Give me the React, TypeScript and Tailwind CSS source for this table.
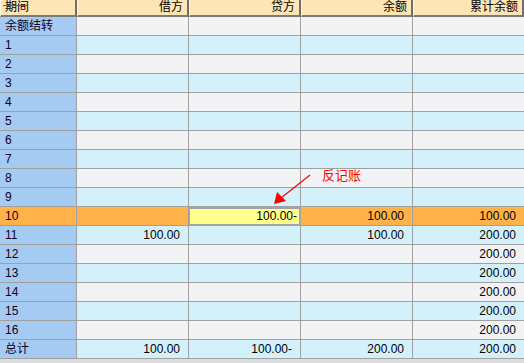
import React from 'react';

type Row = {
  label: string;
  debit?: string;
  credit?: string;
  balance?: string;
  total?: string;
};

const rows: Row[] = [
  { label: '余额结转' },
  { label: '1' },
  { label: '2' },
  { label: '3' },
  { label: '4' },
  { label: '5' },
  { label: '6' },
  { label: '7' },
  { label: '8' },
  { label: '9' },
  { label: '10', credit: '100.00-', balance: '100.00', total: '100.00' },
  { label: '11', debit: '100.00', balance: '100.00', total: '200.00' },
  { label: '12', total: '200.00' },
  { label: '13', total: '200.00' },
  { label: '14', total: '200.00' },
  { label: '15', total: '200.00' },
  { label: '16', total: '200.00' },
  { label: '总计', debit: '100.00', credit: '100.00-', balance: '200.00', total: '200.00' },
];

const font = { fontFamily: '"Liberation Sans", "Noto Sans CJK SC", sans-serif' };

const headers = ['借方', '贷方', '余额', '累计余额'];

const App: React.FC = () => {
  return (
    <div className="relative w-[524px] h-[363px] bg-[#dcdcdc] overflow-hidden text-[12px] text-black" style={font}>
      {/* header */}
      <div className="grid grid-cols-[77px_112px_112px_112px_111px] h-[17px]">
        <div className="relative bg-[#fee5b6] border-l border-[#fff6e4] border-r-2 border-r-[#6e6e6e] border-b-2 border-b-[#7a7a7a] pl-[4px] leading-[15px]">
          期间
          <span className="absolute left-[2px] top-[5px] w-[24px] h-[1px] bg-[#e03020]" />
        </div>
        {headers.map((h) => (
          <div
            key={h}
            className="bg-[#fee5b6] border-l border-[#fff6e4] border-r-2 border-r-[#6e6e6e] border-b-2 border-b-[#7a7a7a] pr-[4px] text-right leading-[15px]"
          >
            {h}
          </div>
        ))}
      </div>

      {/* body */}
      {rows.map((r, i) => {
        const hot = r.label === '10';
        const bg = hot ? 'bg-[#ffb24a]' : i % 2 === 1 ? 'bg-[#d3f1fb]' : 'bg-[#f3f2f5]';
        return (
          <div key={r.label} className="grid grid-cols-[77px_112px_112px_112px_111px] h-[19px]">
            <div className={`${hot ? 'bg-[#ffb24a]' : 'bg-[#a5cbf3]'} border-r border-b border-[#a0a0a0] pl-[5px] leading-[18px] text-[#100020]`}>
              {r.label}
            </div>
            <div className={`${bg} border-r border-b border-[#a0a0a0] pr-[8px] text-right leading-[18px]`}>{r.debit}</div>
            {hot ? (
              <div className="bg-[#ffff8c] border-[2px] border-[#a4a4a4] border-l-[1px] pr-[2px] text-right leading-[15px]">
                {r.credit}
              </div>
            ) : (
              <div className={`${bg} border-r border-b border-[#a0a0a0] pr-[8px] text-right leading-[18px]`}>{r.credit}</div>
            )}
            <div className={`${bg} border-r border-b border-[#a0a0a0] pr-[8px] text-right leading-[18px]`}>{r.balance}</div>
            <div className={`${bg} border-b border-[#a0a0a0] pr-[8px] text-right leading-[18px]`}>{r.total}</div>
          </div>
        );
      })}

      {/* annotation */}
      <span className="absolute left-[322px] top-[168px] text-[13px] text-[#ff0000] leading-[16px]">反记账</span>
      <svg className="absolute left-0 top-0" width="524" height="363">
        <line x1="310" y1="175" x2="281" y2="198" stroke="#ff0000" strokeWidth="1.2" />
        <polygon points="274,204 277,192 286,201" fill="#ff0000" />
      </svg>
    </div>
  );
};

export default App;
